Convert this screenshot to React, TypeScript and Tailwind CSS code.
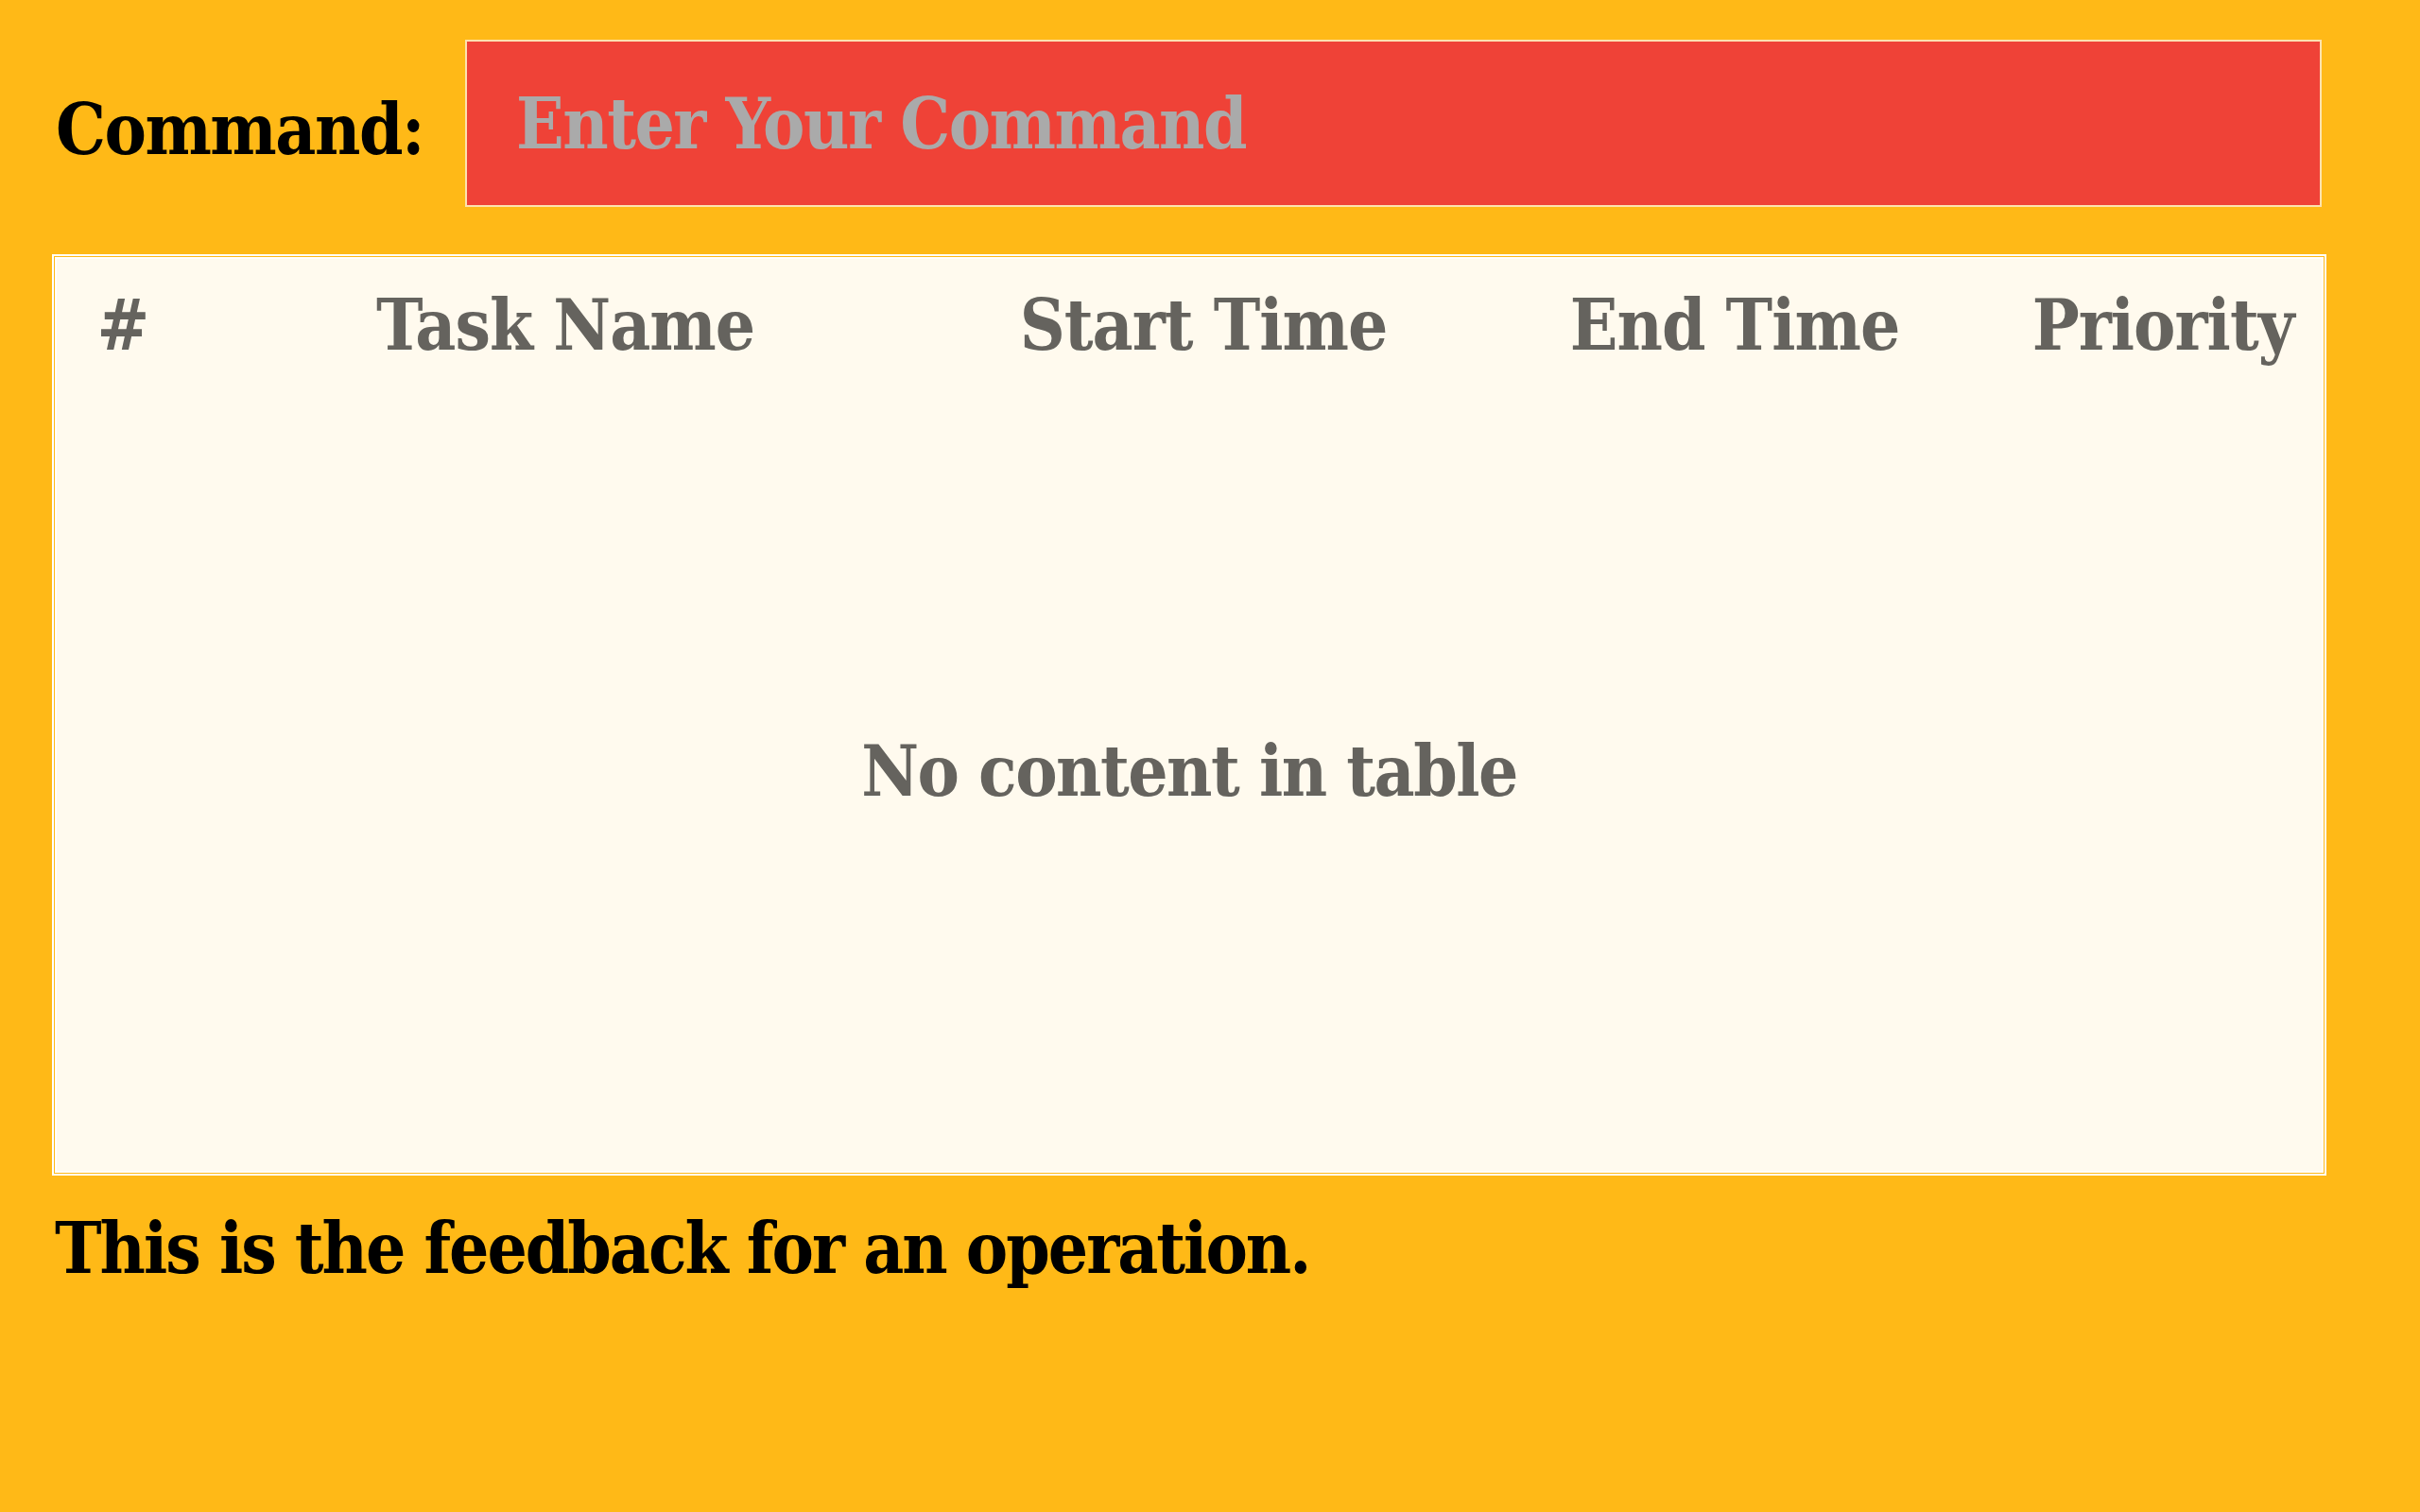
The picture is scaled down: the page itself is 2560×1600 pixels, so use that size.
import React, { useState } from 'react';

const FONT = "font-['DejaVu_Serif_Condensed','DejaVu_Serif',serif]";

const columns = ['#', 'Task Name', 'Start Time', 'End Time', 'Priority'];

const App: React.FC = () => {
  const [command, setCommand] = useState('');

  return (
    <div className={`min-h-screen w-full bg-[#ffb917] ${FONT} pl-[55px] pr-[104px] pt-[42px]`}>
      {/* command bar */}
      <div className="flex items-center">
        <label className="w-[437px] shrink-0 pl-[4px] pt-[14px] text-[74px] font-bold text-black tracking-[-1.5px]">
          Command:
        </label>
        <input
          value={command}
          onChange={(e) => setCommand(e.target.value)}
          placeholder="Enter Your Command"
          className="h-[177px] flex-1 border-2 border-[#fde2ae] bg-[#ef4237] pl-[52px] text-[74px] font-bold tracking-[-1.5px] text-white placeholder:text-[#aaaaaa] outline-none"
        />
      </div>

      {/* task table */}
      <div className="mt-[50px] mr-[-5px] flex h-[975px] flex-col border-[5px] border-double border-white bg-[#fffaee] bg-clip-padding text-[#65635e]">
        <div className="grid h-[140px] grid-cols-[140px_796px_554px_570px_1fr] items-center justify-items-center text-[74px] font-bold tracking-[-1px]">
          {columns.map((c) => (
            <div key={c}>{c}</div>
          ))}
        </div>
        <div className="flex flex-1 items-center justify-center pb-[20px] text-[74px] font-bold tracking-[-1.5px]">
          No content in table
        </div>
      </div>

      {/* feedback */}
      <div className="mt-[22px] pl-[3px] text-[74px] font-bold text-black tracking-[-2px]">
        This is the feedback for an operation.
      </div>
    </div>
  );
};

export default App;
